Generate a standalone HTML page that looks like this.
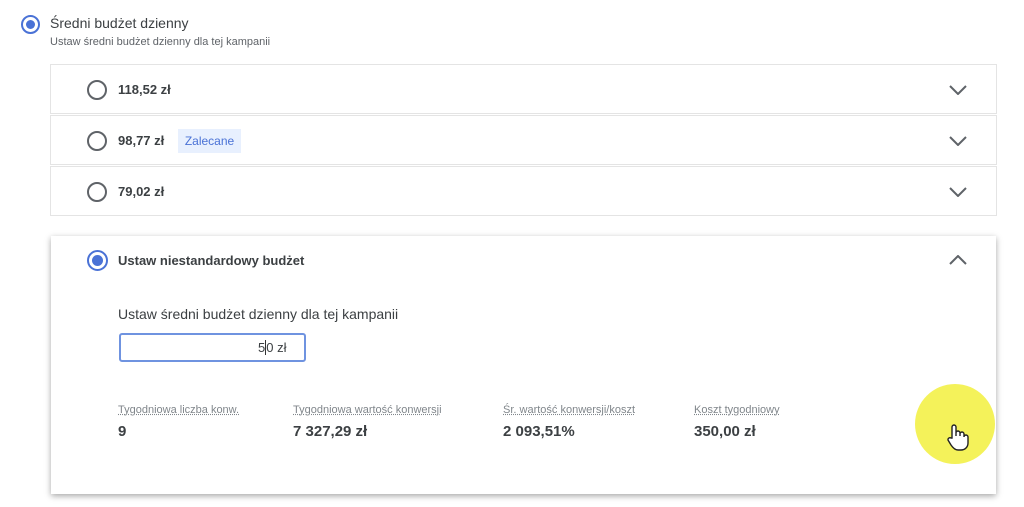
<!DOCTYPE html>
<html><head><meta charset="utf-8"><style>
body{margin:0;width:1024px;height:507px;background:#fff;font-family:"Liberation Sans",sans-serif;color:#3c4043;position:relative;overflow:hidden}
.a{position:absolute}
.radio{position:absolute;width:16px;height:16px;border:2px solid #5f6368;border-radius:50%;box-sizing:border-box}
.radio.on{border-color:#4a72d6}
.radio.on::after{content:"";position:absolute;left:3px;top:3px;right:3px;bottom:3px;border-radius:50%;background:#4a72d6}
.row{position:absolute;left:50px;width:947px;height:50px;border:1px solid #e4e4e4;box-sizing:border-box;background:#fff}
.val{position:absolute;left:118px;font-size:13px;font-weight:bold;color:#3c4043}
.chev{position:absolute;left:949px;width:18px;height:10px}
.lab{font-size:11px;color:#80868b;text-decoration:underline dotted;position:absolute;top:404px}
.num{font-size:15px;font-weight:bold;position:absolute;top:423px;color:#3c4043}
</style></head><body>
<div class="radio on" style="left:21px;top:15px;width:19px;height:19px"></div>
<div class="a" style="left:50px;top:15px;font-size:14px">Średni budżet dzienny</div>
<div class="a" style="left:50px;top:36px;font-size:11px;color:#5f6368">Ustaw średni budżet dzienny dla tej kampanii</div>

<div class="row" style="top:64px"></div>
<div class="row" style="top:115px"></div>
<div class="row" style="top:166px"></div>
<div class="radio" style="left:87px;top:80px;width:20px;height:20px"></div>
<div class="val" style="top:82px">118,52 zł</div>
<div class="radio" style="left:87px;top:131px;width:20px;height:20px"></div>
<div class="val" style="top:133px">98,77 zł</div>
<div class="a" style="left:178px;top:129px;width:63px;height:24px;background:#e8f0fe;color:#4a72d6;font-size:12px;line-height:24px;text-align:center">Zalecane</div>
<div class="radio" style="left:87px;top:182px;width:20px;height:20px"></div>
<div class="val" style="top:184px">79,02 zł</div>
<svg class="chev" style="top:85px" viewBox="0 0 18 10"><path d="M1 1l8 8 8-8" fill="none" stroke="#5f6368" stroke-width="2"/></svg>
<svg class="chev" style="top:136px" viewBox="0 0 18 10"><path d="M1 1l8 8 8-8" fill="none" stroke="#5f6368" stroke-width="2"/></svg>
<svg class="chev" style="top:187px" viewBox="0 0 18 10"><path d="M1 1l8 8 8-8" fill="none" stroke="#5f6368" stroke-width="2"/></svg>

<div class="a" style="left:51px;top:236px;width:945px;height:258px;background:#fff;box-shadow:0 2px 6px rgba(0,0,0,.35)"></div>
<div class="radio on" style="left:87px;top:250px;width:21px;height:21px"></div>
<div class="val" style="top:253px">Ustaw niestandardowy budżet</div>
<svg class="chev" style="top:255px" viewBox="0 0 18 10"><path d="M1 9l8-8 8 8" fill="none" stroke="#5f6368" stroke-width="2"/></svg>
<div class="a" style="left:118px;top:306px;font-size:14px">Ustaw średni budżet dzienny dla tej kampanii</div>
<div class="a" style="left:119px;top:333px;width:187px;height:29px;border:2px solid #6f93e0;border-radius:3px;box-sizing:border-box"></div>
<div class="a" style="left:258px;top:340px;font-size:13px">5<span style="border-left:1px solid #333"></span>0 zł</div>

<div class="lab" style="left:118px">Tygodniowa liczba konw.</div>
<div class="num" style="left:118px">9</div>
<div class="lab" style="left:293px">Tygodniowa wartość konwersji</div>
<div class="num" style="left:293px">7 327,29 zł</div>
<div class="lab" style="left:503px">Śr. wartość konwersji/koszt</div>
<div class="num" style="left:503px">2 093,51%</div>
<div class="lab" style="left:694px">Koszt tygodniowy</div>
<div class="num" style="left:694px">350,00 zł</div>

<div class="a" style="left:915px;top:384px;width:80px;height:80px;border-radius:50%;background:#f4f25a"></div>
<svg class="a" style="left:946px;top:424px" width="26" height="28" viewBox="0 0 26 28"><path d="M6 14V3a2 2 0 014 0v9V9a2 2 0 014 0v3-2a2 2 0 014 0v3a2 2 0 014 0v6c0 4-3 7-7 7h-3c-3 0-5-2-7-5l-3-5a2 2 0 013-2z" fill="#fff" stroke="#222" stroke-width="1.4"/></svg>
</body></html>
